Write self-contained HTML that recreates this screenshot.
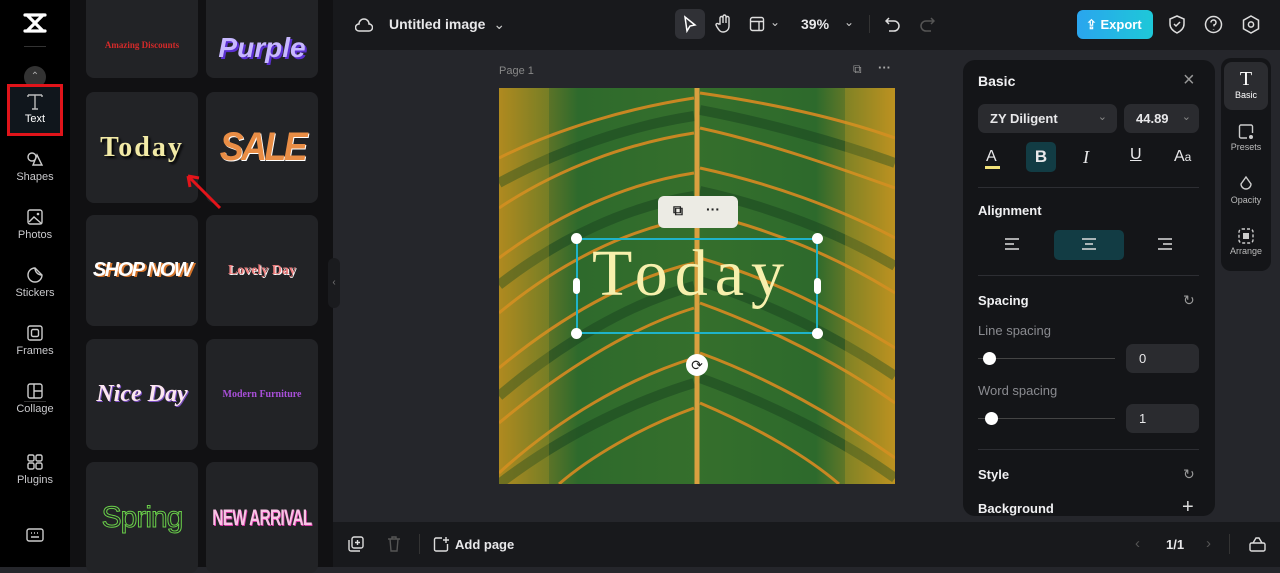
<!DOCTYPE html>
<html><head><meta charset="utf-8"><style>
*{margin:0;padding:0;box-sizing:border-box}
body{width:1280px;height:567px;overflow:hidden;background:#25262b;font-family:"Liberation Sans",sans-serif;color:#e8e8ea;position:relative}
.abs{position:absolute}
.side{left:0;top:0;width:70px;height:567px;background:#000}
.nav{position:absolute;left:0;width:70px;text-align:center;font-size:11px;color:#c9c9cc}
.nav svg{display:block;margin:0 auto 3px}
.panel{left:70px;top:0;width:263px;height:567px;background:#111113}
.card{position:absolute;width:112px;height:111px;background:#222326;border-radius:8px;display:flex;align-items:center;justify-content:center}
.top{left:333px;top:0;width:947px;height:50px;background:#18191c}
.bot{left:333px;top:522px;width:947px;height:45px;background:#18191c}
.rp{left:963px;top:60px;width:252px;height:456px;background:#141518;border-radius:12px;overflow:hidden}
.h{font-weight:bold;font-size:14px;color:#f0f0f2}
.box{position:absolute;background:#2a2b2f;border-radius:7px}
.sep{position:absolute;left:15px;width:221px;height:1px;background:#2d2e33}
</style></head><body>
<div class="abs side">
  <svg class="abs" style="left:23px;top:13px" width="24" height="20" viewBox="0 0 24 20"><path d="M2 2h20M2 18h20M4 2l16 16M20 2L4 18" stroke="#fff" stroke-width="3.2" fill="none" stroke-linecap="round"/></svg>
  <div class="abs" style="left:24px;top:46px;width:22px;height:1px;background:#333"></div>
  <div class="abs" style="left:24px;top:66px;width:22px;height:22px;border-radius:50%;background:#333;color:#aaa;font-size:10px;text-align:center;line-height:22px">⌃</div>
  <div class="abs" style="left:7px;top:84px;width:56px;height:52px;border:3px solid #e0141a;background:#10161c"></div>
  <div class="nav" style="top:92px;color:#fff"><svg width="18" height="18" viewBox="0 0 18 18"><path d="M2 3h14M9 3v14M2 3v2M16 3v2M6 17h6" stroke="#bbb" stroke-width="1.4" fill="none"/></svg>Text</div>
  <div class="nav" style="top:150px"><svg width="18" height="18" viewBox="0 0 18 18"><circle cx="6" cy="7" r="4" stroke="#ccc" stroke-width="1.4" fill="none"/><path d="M11 5l5 10H7z" stroke="#ccc" stroke-width="1.4" fill="none"/></svg>Shapes</div>
  <div class="nav" style="top:208px"><svg width="18" height="18" viewBox="0 0 18 18"><rect x="2" y="2" width="14" height="14" rx="2" stroke="#ccc" stroke-width="1.4" fill="none"/><path d="M3 14l5-5 8 7" stroke="#ccc" stroke-width="1.4" fill="none"/><circle cx="12" cy="6" r="1.3" fill="#ccc"/></svg>Photos</div>
  <div class="nav" style="top:266px"><svg width="18" height="18" viewBox="0 0 18 18"><path d="M16 9A7 7 0 1 1 9 2l7 7z M9 2c0 4 3 7 7 7" stroke="#ccc" stroke-width="1.4" fill="none"/></svg>Stickers</div>
  <div class="nav" style="top:324px"><svg width="18" height="18" viewBox="0 0 18 18"><rect x="2" y="2" width="14" height="14" rx="2" stroke="#ccc" stroke-width="1.4" fill="none"/><rect x="5.5" y="5.5" width="7" height="7" rx="1.5" stroke="#ccc" stroke-width="1.4" fill="none"/></svg>Frames</div>
  <div class="nav" style="top:382px"><svg width="18" height="18" viewBox="0 0 18 18"><rect x="2" y="2" width="14" height="14" rx="2" stroke="#ccc" stroke-width="1.4" fill="none"/><path d="M8 2v14M8 9h8" stroke="#ccc" stroke-width="1.4"/></svg>Collage</div>
  <div class="abs" style="left:24px;top:401px;width:22px;height:1px;background:#333"></div>
  <div class="nav" style="top:453px"><svg width="18" height="18" viewBox="0 0 18 18"><rect x="2" y="2" width="6" height="6" rx="1.5" stroke="#ccc" stroke-width="1.4" fill="none"/><rect x="10" y="2" width="6" height="6" rx="1.5" stroke="#ccc" stroke-width="1.4" fill="none"/><rect x="2" y="10" width="6" height="6" rx="1.5" stroke="#ccc" stroke-width="1.4" fill="none"/><rect x="10" y="10" width="6" height="6" rx="1.5" stroke="#ccc" stroke-width="1.4" fill="none"/></svg>Plugins</div>
  <svg class="abs" style="left:26px;top:528px" width="18" height="14" viewBox="0 0 18 14"><rect x="1" y="1" width="16" height="12" rx="2" stroke="#ccc" stroke-width="1.4" fill="none"/><path d="M5 9h8M5 5h1M8 5h1M11 5h1" stroke="#ccc" stroke-width="1.4"/></svg>
</div>
<div class="abs panel">
  <div class="card" style="left:16px;top:-33px"><span style="color:#d42a2a;font:bold 9px 'Liberation Serif',serif;margin-top:44px">Amazing Discounts</span></div>
  <div class="card" style="left:136px;top:-33px"><span style="color:#c7b8ff;font:italic 900 28px 'Liberation Sans';text-shadow:2px 2px 0 #5a2fd0;margin-top:50px">Purple</span></div>
  <div class="card" style="left:16px;top:92px;height:111px"><span style="color:#f2eaa6;font:bold 28px 'Liberation Serif',serif;letter-spacing:2px;text-shadow:2px 2px 2px #000">Today</span></div>
  <div class="card" style="left:136px;top:92px"><span style="color:#e98d45;font:italic 900 40px 'Liberation Sans';letter-spacing:-3px;transform:scaleX(.9);text-shadow:1px 1px 0 #fff">SALE</span></div>
  <div class="card" style="left:16px;top:215px"><span style="color:#fff;font:italic 900 20px 'Liberation Sans';letter-spacing:-1.5px;text-shadow:2px 1px 0 #d5742a">SHOP NOW</span></div>
  <div class="card" style="left:136px;top:215px"><span style="color:#f08080;font:bold 14px 'Liberation Serif';text-shadow:1px 1px 0 #fff">Lovely Day</span></div>
  <div class="card" style="left:16px;top:339px"><span style="color:#fbe6f0;font:italic bold 24px 'Liberation Serif';text-shadow:1px 1px 0 #7a4ec0">Nice Day</span></div>
  <div class="card" style="left:136px;top:339px"><span style="color:#a84fd8;font:bold 10px 'Liberation Serif'">Modern Furniture</span></div>
  <div class="card" style="left:16px;top:462px"><span style="color:transparent;-webkit-text-stroke:1px #6ad04a;font:30px 'Liberation Sans';letter-spacing:-1px">Spring</span></div>
  <div class="card" style="left:136px;top:462px"><span style="color:#f9c4e6;font:bold 22px 'Liberation Sans';transform:scaleX(.7);letter-spacing:-1px;text-shadow:1px 1px 0 #d83aa8;white-space:nowrap">NEW ARRIVAL</span></div>
  <svg class="abs" style="left:110px;top:168px" width="45" height="45"><path d="M40 40L8 8M8 8l2 11M8 8l11 2" stroke="#e4141a" stroke-width="3" fill="none"/></svg>
</div>
<div class="abs" style="left:328px;top:258px;width:12px;height:50px;background:#1a1b1e;border-radius:6px;color:#777;font-size:10px;text-align:center;line-height:50px">‹</div>
<div class="abs top">
  <svg class="abs" style="left:22px;top:16px" width="18" height="18" viewBox="0 0 18 18"><path d="M4 15h10a3.5 3.5 0 0 0 0-7 5 5 0 0 0-10 0 3.5 3.5 0 0 0 0 7z" stroke="#ddd" stroke-width="1.5" fill="none"/></svg>
  <div class="abs" style="left:56px;top:16px;font-size:14px;font-weight:bold">Untitled image <span style="font-weight:normal;color:#ccc;margin-left:4px">⌄</span></div>
  <div class="abs" style="left:342px;top:9px;width:30px;height:30px;background:#303136;border-radius:6px"></div>
  <svg class="abs" style="left:349px;top:15px" width="16" height="18"><path d="M3 2l10 8-5 1-3 5z" stroke="#fff" stroke-width="1.5" fill="none"/></svg>
  <svg class="abs" style="left:382px;top:14px" width="18" height="20"><path d="M5 10V4a1.5 1.5 0 0 1 3 0v5V2.5a1.5 1.5 0 0 1 3 0V9V4a1.5 1.5 0 0 1 3 0v8c0 4-3 6-6 6s-4-2-6-5l-1-2a1.4 1.4 0 0 1 2.5-1z" stroke="#ddd" stroke-width="1.4" fill="none"/></svg>
  <svg class="abs" style="left:416px;top:16px" width="16" height="16"><rect x="1.5" y="1.5" width="13" height="13" rx="2" stroke="#ddd" stroke-width="1.4" fill="none"/><path d="M1.5 5.5h13M10 5.5v9" stroke="#ddd" stroke-width="1.4"/></svg>
  <span class="abs" style="left:437px;top:15px;color:#ccc;font-size:12px">⌄</span>
  <div class="abs" style="left:468px;top:16px;font-size:14px;font-weight:bold">39%</div>
  <span class="abs" style="left:511px;top:15px;color:#ccc;font-size:12px">⌄</span>
  <div class="abs" style="left:536px;top:15px;width:1px;height:18px;background:#333"></div>
  <svg class="abs" style="left:552px;top:15px" width="16" height="18"><path d="M4 3L1 6l3 3M1 6h8a5 5 0 0 1 0 10H4" stroke="#ddd" stroke-width="1.5" fill="none"/></svg>
  <svg class="abs" style="left:586px;top:15px" width="16" height="18"><path d="M12 3l3 3-3 3M15 6H7a5 5 0 0 0 0 10h5" stroke="#555" stroke-width="1.5" fill="none"/></svg>
  <div class="abs" style="left:744px;top:10px;width:76px;height:29px;border-radius:6px;background:linear-gradient(90deg,#2aa5ee,#1ec8d8);color:#fff;font-size:13px;font-weight:bold;line-height:29px;padding-left:9px">⇪ Export</div>
  <svg class="abs" style="left:835px;top:15px" width="18" height="19"><path d="M9 1l7 3v5c0 4-3 7-7 9-4-2-7-5-7-9V4z M6 9l2 2 4-4" stroke="#ddd" stroke-width="1.5" fill="none"/></svg>
  <svg class="abs" style="left:871px;top:15px" width="19" height="19"><circle cx="9.5" cy="9.5" r="8" stroke="#ddd" stroke-width="1.5" fill="none"/><path d="M7 7.5a2.5 2.5 0 1 1 3 2.4v1.5M9.5 14v.5" stroke="#ddd" stroke-width="1.5" fill="none"/></svg>
  <svg class="abs" style="left:909px;top:15px" width="18" height="19"><path d="M9 1l7.5 4.2v8.6L9 18l-7.5-4.2V5.2z" stroke="#ddd" stroke-width="1.5" fill="none"/><circle cx="9" cy="9.5" r="2.6" stroke="#ddd" stroke-width="1.5" fill="none"/></svg>
</div>
<div class="abs" style="left:499px;top:65px;font-size:11px;color:#888">Page 1</div>
<div class="abs" style="left:853px;top:62px;font-size:12px;color:#999">⧉</div>
<div class="abs" style="left:878px;top:60px;font-size:13px;color:#aaa;font-weight:bold">···</div>
<svg class="abs" style="left:499px;top:88px" width="396" height="396" viewBox="0 0 396 396">
  <defs><linearGradient id="g" x1="0" y1="0" x2="1" y2="0"><stop offset="0" stop-color="#a88320"/><stop offset=".2" stop-color="#2e6a2c"/><stop offset=".5" stop-color="#356f2c"/><stop offset=".8" stop-color="#2d6a2c"/><stop offset="1" stop-color="#b88c20"/></linearGradient></defs>
  <rect width="396" height="396" fill="url(#g)"/>
  <g stroke="#1d4a22" stroke-width="10" fill="none" opacity=".6">
    <path d="M195 28C130 38 60 62 0 95"/><path d="M195 108C130 118 60 150 0 197"/><path d="M195 198C130 215 60 257 0 308"/><path d="M195 295C130 315 60 350 0 396"/>
    <path d="M201 22C270 35 340 55 396 75"/><path d="M201 103C270 118 340 145 396 178"/><path d="M201 193C270 215 340 250 396 288"/><path d="M201 290C270 315 340 350 396 390"/>
  </g>
  <g stroke="#d88a22" stroke-width="3" fill="none" opacity=".9">
    <path d="M195 10C130 20 60 40 0 70"/><path d="M195 45C130 55 60 80 0 120"/><path d="M195 85C130 95 60 125 0 170"/><path d="M195 130C130 140 60 175 0 225"/><path d="M195 175C130 190 60 230 0 280"/><path d="M195 220C130 240 60 285 0 335"/><path d="M195 270C130 290 60 330 0 385"/><path d="M195 320C140 340 90 370 60 396"/>
    <path d="M201 5C270 15 340 30 396 50"/><path d="M201 40C270 55 340 80 396 100"/><path d="M201 80C270 95 340 120 396 150"/><path d="M201 125C270 140 340 170 396 205"/><path d="M201 170C270 190 340 225 396 260"/><path d="M201 215C270 240 340 275 396 315"/><path d="M201 265C270 290 340 330 396 370"/><path d="M201 315C260 340 310 370 340 396"/>
  </g>
  <path d="M198 0V396" stroke="#d9a040" stroke-width="5"/>
  <rect x="0" y="0" width="50" height="396" fill="#c9a021" opacity=".25"/><rect x="346" y="0" width="50" height="396" fill="#c9a021" opacity=".3"/>
</svg>
<div class="abs" style="left:658px;top:196px;width:80px;height:32px;background:#ecebe4;border-radius:6px;color:#222;font-size:14px;font-weight:bold"><span style="position:absolute;left:15px;top:6px">⧉</span><span style="position:absolute;left:48px;top:5px">···</span></div>
<div class="abs" style="left:576px;top:238px;width:242px;height:96px;border:2px solid #1fb3c9"></div>
<div class="abs" style="left:592px;top:236px;font:66px 'Liberation Serif',serif;color:#f7f0ad;letter-spacing:7px">Today</div>
<div class="abs" style="left:571px;top:233px;width:11px;height:11px;border-radius:50%;background:#fff"></div>
<div class="abs" style="left:812px;top:233px;width:11px;height:11px;border-radius:50%;background:#fff"></div>
<div class="abs" style="left:571px;top:328px;width:11px;height:11px;border-radius:50%;background:#fff"></div>
<div class="abs" style="left:812px;top:328px;width:11px;height:11px;border-radius:50%;background:#fff"></div>
<div class="abs" style="left:573px;top:278px;width:7px;height:16px;border-radius:4px;background:#fff"></div>
<div class="abs" style="left:814px;top:278px;width:7px;height:16px;border-radius:4px;background:#fff"></div>
<div class="abs" style="left:686px;top:354px;width:22px;height:22px;border-radius:50%;background:#fff;color:#222;font-size:14px;text-align:center;line-height:22px">⟳</div>
<div class="abs rp">
  <div class="abs h" style="left:15px;top:13px">Basic</div>
  <div class="abs" style="left:220px;top:9px;font-size:20px;color:#999">×</div>
  <div class="box" style="left:15px;top:44px;width:139px;height:29px"><span style="position:absolute;left:12px;top:7px;font-size:13px;font-weight:bold">ZY Diligent</span><span style="position:absolute;right:10px;top:6px;color:#888;font-size:11px">⌄</span></div>
  <div class="box" style="left:161px;top:44px;width:75px;height:29px"><span style="position:absolute;left:12px;top:7px;font-size:13px;font-weight:bold">44.89</span><span style="position:absolute;right:8px;top:6px;color:#888;font-size:11px">⌄</span></div>
  <div class="abs" style="left:23px;top:88px;font-size:16px">A</div><div class="abs" style="left:22px;top:106px;width:15px;height:3px;background:#f2e27a"></div>
  <div class="abs" style="left:63px;top:82px;width:30px;height:30px;background:#123c44;border-radius:5px;font-size:17px;font-weight:bold;text-align:center;line-height:30px">B</div>
  <div class="abs" style="left:120px;top:87px;font:italic 18px 'Liberation Serif'">I</div>
  <div class="abs" style="left:167px;top:86px;font-size:16px;text-decoration:underline">U</div>
  <div class="abs" style="left:211px;top:88px;font-size:16px">A<span style="font-size:12px">a</span></div>
  <div class="sep" style="top:127px"></div>
  <div class="abs h" style="left:15px;top:143px;font-size:13px">Alignment</div>
  <div class="abs" style="left:91px;top:170px;width:70px;height:30px;background:#123c44;border-radius:5px"></div>
  <svg class="abs" style="left:42px;top:178px" width="14" height="12"><path d="M0 1h14M0 6h9M0 11h14" stroke="#ddd" stroke-width="1.4"/></svg>
  <svg class="abs" style="left:119px;top:178px" width="14" height="12"><path d="M0 1h14M3 6h8M0 11h14" stroke="#ddd" stroke-width="1.4"/></svg>
  <svg class="abs" style="left:195px;top:178px" width="14" height="12"><path d="M0 1h14M5 6h9M0 11h14" stroke="#ddd" stroke-width="1.4"/></svg>
  <div class="sep" style="top:215px"></div>
  <div class="abs h" style="left:15px;top:233px;font-size:13px">Spacing</div>
  <div class="abs" style="left:220px;top:232px;color:#999;font-size:14px">↻</div>
  <div class="abs" style="left:15px;top:263px;font-size:13px;color:#8a8b90">Line spacing</div>
  <div class="abs" style="left:15px;top:298px;width:137px;height:1px;background:#444"></div>
  <div class="abs" style="left:20px;top:292px;width:13px;height:13px;border-radius:50%;background:#fff"></div>
  <div class="box" style="left:163px;top:284px;width:73px;height:29px"><span style="position:absolute;left:13px;top:7px;font-size:13px">0</span></div>
  <div class="abs" style="left:15px;top:323px;font-size:13px;color:#8a8b90">Word spacing</div>
  <div class="abs" style="left:15px;top:358px;width:137px;height:1px;background:#444"></div>
  <div class="abs" style="left:22px;top:352px;width:13px;height:13px;border-radius:50%;background:#fff"></div>
  <div class="box" style="left:163px;top:344px;width:73px;height:29px"><span style="position:absolute;left:13px;top:7px;font-size:13px">1</span></div>
  <div class="sep" style="top:389px"></div>
  <div class="abs h" style="left:15px;top:407px;font-size:13px">Style</div>
  <div class="abs" style="left:220px;top:406px;color:#999;font-size:14px">↻</div>
  <div class="abs h" style="left:15px;top:441px;font-size:13px">Background</div>
  <div class="abs" style="left:219px;top:436px;font-size:20px;color:#ddd">+</div>
</div>
<div class="abs" style="left:1221px;top:58px;width:50px;height:213px;background:#141518;border-radius:10px"></div>
<div class="abs" style="left:1224px;top:62px;width:44px;height:48px;background:#2b2c30;border-radius:8px"></div>
<div class="abs" style="left:1221px;top:68px;width:50px;text-align:center;font-size:9px;color:#fff"><div style="font:20px 'Liberation Serif';line-height:22px">T</div>Basic</div>
<div class="abs" style="left:1221px;top:124px;width:50px;text-align:center;font-size:9px;color:#bbb"><svg width="16" height="16" style="display:block;margin:0 auto 2px"><path d="M9 14H3a1.5 1.5 0 0 1-1.5-1.5v-10A1.5 1.5 0 0 1 3 1h10a1.5 1.5 0 0 1 1.5 1.5V9" stroke="#ccc" stroke-width="1.4" fill="none"/><circle cx="13" cy="13" r="2" fill="#ccc"/></svg>Presets</div>
<div class="abs" style="left:1221px;top:176px;width:50px;text-align:center;font-size:9px;color:#bbb"><svg width="16" height="17" style="display:block;margin:0 auto 2px"><path d="M8 1l5 7a5 5 0 1 1-10 0z" stroke="#ccc" stroke-width="1.4" fill="none"/></svg>Opacity</div>
<div class="abs" style="left:1221px;top:228px;width:50px;text-align:center;font-size:9px;color:#bbb"><svg width="16" height="16" style="display:block;margin:0 auto 2px"><rect x="1" y="1" width="14" height="14" rx="3" stroke="#ccc" stroke-width="1.4" fill="none" stroke-dasharray="3 2"/><rect x="5" y="5" width="6" height="6" fill="#ccc"/></svg>Arrange</div>
<div class="abs bot">
  <svg class="abs" style="left:15px;top:14px" width="16" height="16"><rect x="4" y="1" width="11" height="11" rx="2" stroke="#ddd" stroke-width="1.4" fill="none"/><path d="M1 4v9a2 2 0 0 0 2 2h9M9.5 4v5M7 6.5h5" stroke="#ddd" stroke-width="1.4" fill="none"/></svg>
  <svg class="abs" style="left:54px;top:14px" width="14" height="16"><path d="M1 3h12M5 3V1h4v2M3 3l1 12h6l1-12" stroke="#555" stroke-width="1.4" fill="none"/></svg>
  <div class="abs" style="left:86px;top:12px;width:1px;height:20px;background:#333"></div>
  <svg class="abs" style="left:100px;top:14px" width="17" height="17"><path d="M9 2H3a1.5 1.5 0 0 0-1.5 1.5v10A1.5 1.5 0 0 0 3 15h10a1.5 1.5 0 0 0 1.5-1.5V8M13 1v6M10 4h6" stroke="#ddd" stroke-width="1.4" fill="none"/></svg>
  <div class="abs" style="left:122px;top:15px;font-size:13px;font-weight:bold">Add page</div>
  <div class="abs" style="left:802px;top:13px;color:#555;font-size:15px">‹</div>
  <div class="abs" style="left:833px;top:15px;font-size:13px;font-weight:bold">1/1</div>
  <div class="abs" style="left:873px;top:13px;color:#555;font-size:15px">›</div>
  <div class="abs" style="left:896px;top:12px;width:1px;height:20px;background:#333"></div>
  <svg class="abs" style="left:916px;top:14px" width="17" height="16"><rect x="1" y="7" width="15" height="8" rx="1.5" stroke="#ddd" stroke-width="1.4" fill="none"/><path d="M4 7l3-5h3l3 5" stroke="#ddd" stroke-width="1.4" fill="none"/></svg>
</div>
</body></html>
